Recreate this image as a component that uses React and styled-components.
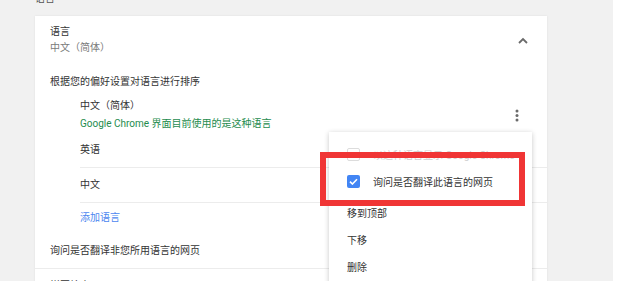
import React from 'react';
import styled, { createGlobalStyle } from 'styled-components';

const GlobalStyle = createGlobalStyle`
  html, body {
    margin: 0;
    padding: 0;
    background: #fff;
  }
  body {
    font-family: Roboto, "Noto Sans CJK SC", sans-serif;
    font-size: 10px;
    color: #333;
  }
`;

const LANGS = ['英语', '中文'];

const MENU = [
    { label: '移到顶部' },
    { label: '下移' },
    { label: '删除' },
];

const ChevronUp = () => (
    <svg width="10" height="7" viewBox="0 0 10 7">
        <path d="M1 6 L5 2 L9 6" fill="none" stroke="#6a6a6a" strokeWidth="1.8" />
    </svg>
);

const Kebab = () => (
    <svg width="4" height="13" viewBox="0 0 4 13">
        <circle cx="2" cy="2" r="1.5" fill="#6a6a6a" />
        <circle cx="2" cy="6.5" r="1.5" fill="#6a6a6a" />
        <circle cx="2" cy="11" r="1.5" fill="#6a6a6a" />
    </svg>
);

const Tick = () => (
    <svg width="9" height="7" viewBox="0 0 9 7">
        <path d="M1 3.6 L3.4 6 L8 1.2" fill="none" stroke="#fff" strokeWidth="1.6" />
    </svg>
);

const App = () => {
    return (
        <>
            <GlobalStyle />
            <Screen>
                <Backdrop>
                    <PageHeading>语言</PageHeading>
                    <Card>
                        <Header>
                            <div>
                                <Title>语言</Title>
                                <Sub>中文（简体）</Sub>
                            </div>
                            <IconSlot>
                                <ChevronUp />
                            </IconSlot>
                        </Header>
                        <SortLabel>根据您的偏好设置对语言进行排序</SortLabel>
                        <LangList>
                            <FirstLang>
                                <div>
                                    <LangName>中文（简体）</LangName>
                                    <LangNote>Google Chrome 界面目前使用的是这种语言</LangNote>
                                </div>
                                <KebabSlot>
                                    <Kebab />
                                </KebabSlot>
                            </FirstLang>
                            {LANGS.map(lang => (
                                <LangRow key={lang}>{lang}</LangRow>
                            ))}
                            <AddLink>添加语言</AddLink>
                        </LangList>
                        <SettingRow>询问是否翻译非您所用语言的网页</SettingRow>
                        <SettingRow $plain>拼写检查</SettingRow>

                        <Menu>
                            <CheckItem $disabled>
                                <Box />
                                以这种语言显示 Google Chrome
                            </CheckItem>
                            <CheckItem>
                                <Box $checked>
                                    <Tick />
                                </Box>
                                询问是否翻译此语言的网页
                            </CheckItem>
                            {MENU.map((item, i) => (
                                <MenuItem key={item.label} $first={i === 0}>
                                    {item.label}
                                </MenuItem>
                            ))}
                        </Menu>
                    </Card>
                </Backdrop>
                <Highlight />
            </Screen>
        </>
    );
};

const Screen = styled.div`
  position: relative;
  width: 620px;
  height: 281px;
  overflow: hidden;
  display: flex;
  background: #fff;
`;

const Backdrop = styled.div`
  width: 613px;
  height: 100%;
  box-sizing: border-box;
  background: #f1f1f1;
  padding-left: 35px;
`;

const PageHeading = styled.div`
  margin-top: -9px;
  line-height: 16px;
  height: 16px;
  color: #555;
  margin-bottom: 9px;
`;

const Card = styled.div`
  position: relative;
  width: 512px;
  height: 300px;
  background: #fff;
  box-shadow: 0 0 2px rgba(0, 0, 0, 0.08);
`;

const Header = styled.div`
  display: flex;
  align-items: center;
  justify-content: space-between;
  padding: 8px 19px 0 15px;
`;

const Title = styled.div`
  line-height: 16px;
  color: #333;
`;

const Sub = styled.div`
  line-height: 16px;
  color: #7a7a7a;
`;

const IconSlot = styled.div`
  display: flex;
`;

const SortLabel = styled.div`
  margin-top: 18px;
  padding-left: 15px;
  line-height: 16px;
  color: #333;
`;

const LangList = styled.div`
  margin-left: 45px;
  padding-top: 7px;
`;

const FirstLang = styled.div`
  display: flex;
  align-items: center;
  justify-content: space-between;
  padding: 0 28px 0 0;
  line-height: 18px;
`;

const LangName = styled.div`
  color: #333;
`;

const LangNote = styled.div`
  color: #1e8c4e;
`;

const KebabSlot = styled.div`
  display: flex;
`;

const LangRow = styled.div`
  height: 34px;
  line-height: 34px;
  border-bottom: 1px solid #ececec;
  color: #333;
`;

const AddLink = styled.div`
  height: 30px;
  line-height: 30px;
  color: #4d87f0;
`;

const SettingRow = styled.div`
  height: 36px;
  line-height: ${p => (p.$plain ? '16px' : '36px')};
  padding: ${p => (p.$plain ? '9px 15px 0' : '0 15px')};
  box-sizing: border-box;
  border-bottom: ${p => (p.$plain ? 'none' : '1px solid #ececec')};
  color: #333;
`;

const Menu = styled.div`
  position: absolute;
  left: 294px;
  top: 116px;
  width: 203px;
  padding: 9px 0 8px;
  background: #fff;
  box-shadow: 0 1px 5px rgba(0, 0, 0, 0.22);
`;

const CheckItem = styled.div`
  display: flex;
  align-items: center;
  gap: 13px;
  height: 27px;
  padding-left: 18px;
  color: ${p => (p.$disabled ? '#cfcfcf' : '#333')};
  white-space: nowrap;
  overflow: hidden;
`;

const Box = styled.span`
  display: flex;
  align-items: center;
  justify-content: center;
  width: 13px;
  height: 13px;
  box-sizing: border-box;
  border-radius: 2px;
  flex-shrink: 0;
  background: ${p => (p.$checked ? '#4285f4' : '#fff')};
  border: ${p => (p.$checked ? 'none' : '1.5px solid #dcdcdc')};
`;

const MenuItem = styled.div`
  height: 27px;
  line-height: 27px;
  padding-left: 18px;
  margin-top: ${p => (p.$first ? '5px' : '0')};
  color: #333;
`;

const Highlight = styled.div`
  position: absolute;
  left: 320px;
  top: 152px;
  width: 205px;
  height: 54px;
  box-sizing: border-box;
  border: 6px solid #f03535;
`;

export default App;
